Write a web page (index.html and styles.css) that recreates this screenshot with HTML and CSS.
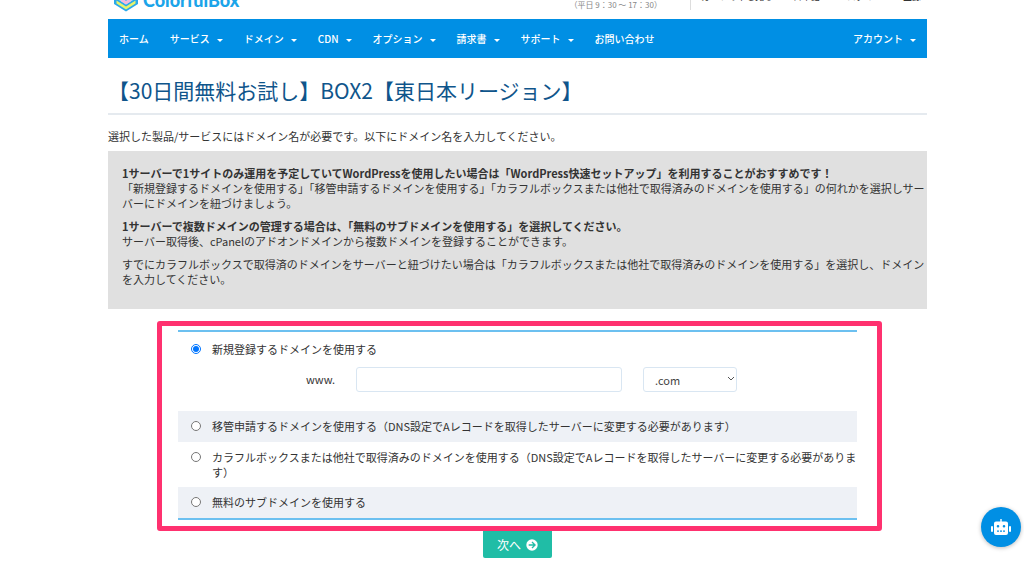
FILE: index.html
```html
<!DOCTYPE html>
<html lang="ja">
<head>
<meta charset="utf-8">
<meta name="viewport" content="width=device-width, initial-scale=1">
<title>ColorfulBox</title>
<link rel="stylesheet" href="styles.css">
</head>
<body>
<div class="page">
  <header class="topbar">
    <a class="brand" href="#">
      <svg class="brand-mark" viewBox="0 0 24 32" aria-hidden="true">
        <path d="M0 8v16l12 7.500L24 24V8z" fill="#2aa9ea"/>
        <path d="M2.500 15l9.500 6 9.500-6v3.500L12 24.500l-9.500-6z" fill="#a9dcf7"/>
        <path d="M7 17.800l5 3.200 5-3.200v3.500l-5 3.200-5-3.200z" fill="#f3b9dc"/>
        <path d="M2.500 20.500l9.500 6 9.500-6v3L12 29.500l-9.500-6z" fill="#e6f46c"/>
      </svg>
      <span class="brand-name">ColorfulBox</span>
    </a>
    <p class="hours">（平日 9：30 ～ 17：30）</p>
    <nav class="quick">
      <a href="#">カートの中を見る</a>
      <a class="lang" href="#">日本語</a>
      <a href="#">ログイン</a>
      <a class="strong" href="#">登録</a>
    </nav>
  </header>
  <nav class="menu">
    <a href="#">ホーム</a>
    <a class="drop" href="#">サービス</a>
    <a class="drop" href="#">ドメイン</a>
    <a class="drop" href="#">CDN</a>
    <a class="drop" href="#">オプション</a>
    <a class="drop" href="#">請求書</a>
    <a class="drop" href="#">サポート</a>
    <a href="#">お問い合わせ</a>
    <a class="drop account" href="#">アカウント</a>
  </nav>
  <main>
    <h1 class="title">【30日間無料お試し】BOX2【東日本リージョン】</h1>
    <p class="lead">選択した製品/サービスにはドメイン名が必要です。以下にドメイン名を入力してください。</p>
    <section class="notice">
      <p><strong>1サーバーで1サイトのみ運用を予定していてWordPressを使用したい場合は「WordPress快速セットアップ」を利用することがおすすめです！</strong><br>「新規登録するドメインを使用する」「移管申請するドメインを使用する」「カラフルボックスまたは他社で取得済みのドメインを使用する」の何れかを選択しサーバーにドメインを紐づけましょう。</p>
      <p><strong>1サーバーで複数ドメインの管理する場合は、「無料のサブドメインを使用する」を選択してください。</strong><br>サーバー取得後、cPanelのアドオンドメインから複数ドメインを登録することができます。</p>
      <p>すでにカラフルボックスで取得済のドメインをサーバーと紐づけたい場合は「カラフルボックスまたは他社で取得済みのドメインを使用する」を選択し、ドメインを入力してください。</p>
    </section>
    <form class="domain-form">
      <div class="frame">
        <div class="options">
          <div class="option first">
            <input type="radio" name="domain" id="opt-new" checked>
            <label for="opt-new">新規登録するドメインを使用する</label>
          </div>
          <div class="lookup">
            <label class="www" for="sld">www.</label>
            <input class="field" type="text" id="sld">
            <div class="tld">
              <select class="field" aria-label="TLD"><option>.com</option></select>
              <svg class="chevron" viewBox="0 0 8 6" aria-hidden="true"><path d="M1 1l3 3 3-3" fill="none" stroke="#555"/></svg>
            </div>
          </div>
          <div class="option shaded">
            <input type="radio" name="domain" id="opt-move">
            <label for="opt-move">移管申請するドメインを使用する（DNS設定でAレコードを取得したサーバーに変更する必要があります）</label>
          </div>
          <div class="option own">
            <input type="radio" name="domain" id="opt-own">
            <label for="opt-own">カラフルボックスまたは他社で取得済みのドメインを使用する（DNS設定でAレコードを取得したサーバーに変更する必要があります）</label>
          </div>
          <div class="option shaded">
            <input type="radio" name="domain" id="opt-sub">
            <label for="opt-sub">無料のサブドメインを使用する</label>
          </div>
        </div>
      </div>
      <button class="next" type="submit">次へ
        <svg viewBox="0 0 12 12" aria-hidden="true"><circle cx="6" cy="6" r="5.7" fill="#fff"/><path d="M2.7 6h6M6 3l3 3-3 3" fill="none" stroke="#20bda6" stroke-width="1.4"/></svg>
      </button>
    </form>
  </main>
</div>
<button class="chat" type="button" aria-label="チャット">
  <svg viewBox="0 0 20 16" aria-hidden="true">
    <path fill="#fff" fill-rule="evenodd" d="M9.3 0h1.4v2.5h4.3a2 2 0 0 1 2 2V14a2 2 0 0 1-2 2H5a2 2 0 0 1-2-2V4.500a2 2 0 0 1 2-2h4.300zM7 6a1.300 1.300 0 1 0 0 2.600A1.300 1.300 0 0 0 7 6zm6 0a1.300 1.300 0 1 0 0 2.600A1.300 1.300 0 0 0 13 6zM6 11.500v1.200h2v-1.200zm3 0v1.200h2v-1.200zm3 0v1.200h2v-1.200z"/>
    <rect x="0" y="7" width="2" height="6" rx="1" fill="#fff"/>
    <rect x="18" y="7" width="2" height="6" rx="1" fill="#fff"/>
  </svg>
</button>
</body>
</html>
```
FILE: styles.css
```css
* { box-sizing: border-box; }

body {
  margin: 0;
  background: #fff;
  color: #333;
  font-family: "Noto Sans CJK JP", sans-serif;
  font-size: 11px;
  line-height: 15px;
  overflow: hidden;
}

a { color: inherit; text-decoration: none; }
p { margin: 0; }

.page { padding: 0 97px 0 108px; }

.topbar {
  display: flex;
  align-items: flex-end;
  height: 19px;
}
.brand {
  display: flex;
  align-items: flex-end;
  gap: 5px;
  padding: 0 0 7px 6px;
  color: #1ba4e9;
}
.brand-mark { width: 24px; height: 32px; }
.brand-name {
  padding-bottom: 2px;
  font: 900 18px/20px Lato, sans-serif;
}
.hours {
  margin-left: auto;
  padding: 0 28px 6px 0;
  color: #888;
  font-size: 8px;
  line-height: 16px;
}
.quick {
  display: flex;
  align-items: flex-end;
  gap: 20px;
  height: 20px;
  margin-bottom: 9px;
  padding: 0 6px 6px 10px;
  border-left: 1px solid #ddd;
  font-size: 9px;
}
.lang { padding-right: 7px; }
.strong { font-weight: bold; }

.menu {
  display: flex;
  align-items: center;
  gap: 21px;
  height: 39px;
  padding: 0 11px 1px;
  background: #008fe4;
  color: #fff;
  font-size: 10px;
  font-weight: 500;
}
.drop::after {
  content: "";
  display: inline-block;
  margin-left: 7px;
  border: 3px solid transparent;
  border-top-color: #fff;
  border-bottom: 0;
  vertical-align: 1px;
}
.account { margin-left: auto; }

.title {
  margin: 0;
  padding: 16px 0 7px;
  border-bottom: 2px solid #e5eaef;
  color: #0f558b;
  font-size: 21px;
  font-weight: 400;
  line-height: 32px;
}
.lead { padding: 13px 0 7px; line-height: 16px; }

.notice {
  padding: 15px 0 14px 14px;
  background: #e0e0e0;
}
.notice p { margin-bottom: 8px; }

.domain-form { padding-top: 12px; }
.frame {
  margin: 0 45px 0 49px;
  padding: 4px 20px 6px 16px;
  border: 5px solid #ff316f;
  border-radius: 3px;
}
.options {
  border-top: 2px solid #6cc0f0;
  border-bottom: 2px solid #6cc0f0;
}
.option {
  display: flex;
  align-items: flex-start;
  gap: 11px;
  padding: 8px 0 8px 12px;
}
.option input {
  flex: none;
  width: 10px;
  height: 10px;
  margin: 2px 0 0 1px;
}
.first { padding-top: 10px; }
.own { padding-bottom: 7px; }
.own label { margin-right: -6px; }
.shaded { background: #eef1f6; }

.lookup {
  display: flex;
  align-items: center;
  gap: 21px;
  padding: 2px 0 19px 128px;
}
.field {
  height: 25px;
  border: 1px solid #d9e6f2;
  border-radius: 3px;
  background: #fff;
  color: #444;
  font: 11px "Noto Sans CJK JP", sans-serif;
}
input.field { flex: 0 1 266px; min-width: 0; }
.tld { position: relative; display: flex; }
.tld .field { width: 94px; padding: 0 11px; appearance: none; }
.chevron {
  position: absolute;
  top: 9px;
  right: 2px;
  width: 8px;
  height: 6px;
  pointer-events: none;
}

.next {
  display: flex;
  align-items: center;
  gap: 5px;
  margin: 0 auto;
  padding: 0 14px;
  height: 27px;
  border: 0;
  border-radius: 0 0 2px 2px;
  background: #20bda6;
  color: #fff;
  font: 12px "Noto Sans CJK JP", sans-serif;
}
.next svg { width: 12px; height: 12px; }

.chat {
  position: fixed;
  right: 3px;
  bottom: 36px;
  display: flex;
  align-items: center;
  justify-content: center;
  width: 40px;
  height: 40px;
  padding: 0;
  border: 0;
  border-radius: 50%;
  background: #008fe4;
  box-shadow: 0 1px 4px #0004;
}
.chat svg { width: 20px; height: 16px; }
```
